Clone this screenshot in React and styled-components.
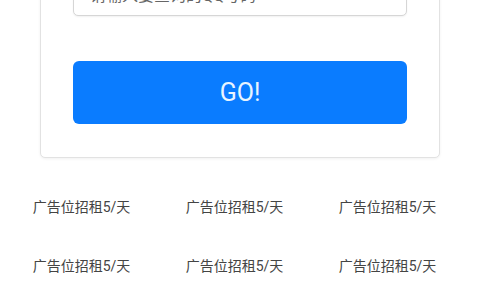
import React from "react";
import styled, { createGlobalStyle } from "styled-components";

const GlobalStyle = createGlobalStyle`
  html, body {
    margin: 0;
    padding: 0;
    background: #fff;
    font-family: Roboto, "Noto Sans CJK SC", sans-serif;
  }
`;

const Page = styled.div`
  width: 480px;
  height: 300px;
  overflow: hidden;
  background: #fff;
`;

const Card = styled.div`
  margin: -58px 40px 0 40px;
  padding: 32px 32px 33px;
  border: 1px solid #e2e2e2;
  border-radius: 5px;
  background: #fff;
  box-shadow: 0 1px 3px rgba(0, 0, 0, 0.06);
  display: flex;
  flex-direction: column;
  gap: 45px;
`;

const SearchInput = styled.input`
  box-sizing: border-box;
  width: 100%;
  height: 41px;
  padding: 0 16px;
  border: 1px solid #d6d6d6;
  border-radius: 5px;
  font-family: inherit;
  font-size: 16px;
  color: #333;
  box-shadow: 0 1px 2px rgba(0, 0, 0, 0.06);
  outline: none;
  &::placeholder {
    color: #666;
  }
`;

const GoButton = styled.button`
  height: 63px;
  border: none;
  border-radius: 6px;
  background: #0a7cff;
  color: #e8f4ff;
  font-family: Roboto, sans-serif;
  font-size: 25px;
  cursor: pointer;
`;

const AdGrid = styled.div`
  margin: 18px 0 0 5px;
  width: 459px;
  display: grid;
  grid-template-columns: repeat(3, 1fr);
  grid-auto-rows: 59px;
`;

const AdItem = styled.div`
  display: flex;
  align-items: center;
  justify-content: center;
  font-family: Roboto, "Noto Sans CJK SC", sans-serif;
  font-size: 14px;
  color: #444;
`;

const ads = Array.from({ length: 6 }, () => "广告位招租5/天");

const App = () => {
  return (
    <Page>
      <GlobalStyle />
      <Card>
        <SearchInput placeholder="请输入要查询的QQ号码" />
        <GoButton>GO!</GoButton>
      </Card>
      <AdGrid>
        {ads.map((text, i) => (
          <AdItem key={i}>{text}</AdItem>
        ))}
      </AdGrid>
    </Page>
  );
};

export default App;
